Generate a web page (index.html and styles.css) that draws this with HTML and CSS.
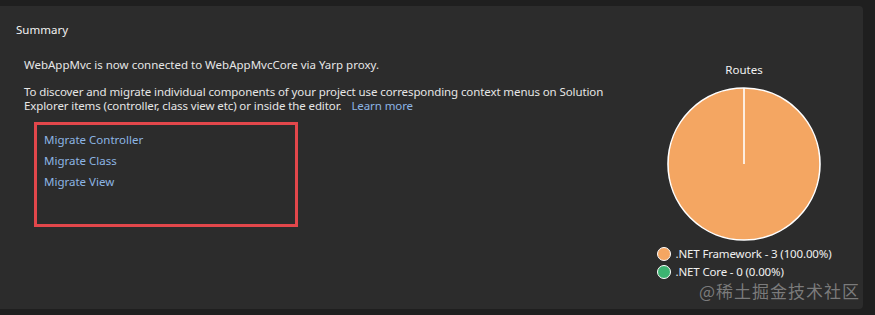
FILE: index.html
```html
<!DOCTYPE html>
<html lang="en">
<head>
    <meta charset="UTF-8" />
    <title>Summary</title>
    <link rel="stylesheet" href="styles.css">
</head>
<body>
    <div class="panel">
        <h2 class="panel-title">Summary</h2>

        <div class="panel-body">
            <div class="summary-text">
                <p class="connected">WebAppMvc is now connected to WebAppMvcCore via Yarp proxy.</p>
                <p class="discover">To discover and migrate individual components of your project use corresponding context menus on Solution Explorer items (controller, class view etc) or inside the editor.<a href="#" class="learn-more">Learn more</a></p>

                <ul class="migrate-list">
                    <li><a href="#">Migrate Controller</a></li>
                    <li><a href="#">Migrate Class</a></li>
                    <li><a href="#">Migrate View</a></li>
                </ul>
            </div>

            <div class="chart">
                <div class="chart-title">Routes</div>
                <svg class="pie" width="156" height="156" viewBox="0 0 156 156">
                    <circle cx="78" cy="78" r="76" fill="#f4a662" stroke="#ffffff" stroke-width="1.6" />
                    <line x1="78" y1="2" x2="78" y2="78" stroke="#ffffff" stroke-width="1.6" />
                </svg>
                <ul class="legend">
                    <li><span class="dot dot-framework"></span>.NET Framework - 3 (100.00%)</li>
                    <li><span class="dot dot-core"></span>.NET Core - 0 (0.00%)</li>
                </ul>
            </div>
        </div>

        <div class="watermark">@稀土掘金技术社区</div>
    </div>
</body>
</html>
```

FILE: styles.css
```css
/* Reset */
* {
    box-sizing: border-box;
    margin: 0;
    padding: 0;
}

body {
    background-color: #1f1f1f;
    color: #e6e6e6;
    font-family: "Noto Sans", "Open Sans", sans-serif;
    font-size: 11.5px;
    padding-top: 6px;
    width: 875px;
    height: 315px;
    overflow: hidden;
}

/* Summary panel */
.panel {
    position: relative;
    width: 863px;
    height: 303px;
    background-color: #2c2c2c;
    border-radius: 0 4px 4px 0;
    padding: 15px 15px 0 16px;
}

.panel-title {
    font-size: 11.5px;
    font-weight: normal;
    line-height: 17px;
    color: #f2f2f2;
}

.panel-body {
    display: flex;
}

.summary-text {
    flex: 1;
    padding-left: 8px;
    line-height: 14px;
}

.connected {
    margin-top: 20px;
}

.discover {
    margin-top: 13px;
    width: 590px;
    letter-spacing: -0.1px;
}

.learn-more {
    color: #8db5e4;
    text-decoration: none;
    padding-left: 10px;
}

/* Migrate links, boxed in red */
.migrate-list {
    list-style: none;
    margin-top: 9px;
    margin-left: 10px;
    width: 264px;
    height: 105px;
    border: 3px solid #e2474b;
    padding: 4px 0 0 7px;
    line-height: 21px;
}

.migrate-list a {
    color: #8db5e4;
    text-decoration: none;
}

/* Routes chart */
.chart {
    width: 208px;
    display: flex;
    flex-direction: column;
    align-items: center;
}

.chart-title {
    margin-top: 24px;
    line-height: 16px;
    color: #f2f2f2;
}

.pie {
    display: block;
    margin-top: 8px;
}

.legend {
    list-style: none;
    margin-top: 3px;
    line-height: 18px;
    color: #f0f0f0;
    letter-spacing: -0.15px;
}

.legend li {
    display: flex;
    align-items: center;
    gap: 5px;
}

.dot {
    width: 14px;
    height: 14px;
    border-radius: 50%;
    border: 1.5px solid #ffffff;
}

.dot-framework {
    background-color: #f4a662;
}

.dot-core {
    background-color: #3cb371;
}

/* Site watermark over the corner */
.watermark {
    position: absolute;
    right: 3px;
    bottom: 6px;
    font-family: "Noto Sans CJK SC", sans-serif;
    font-size: 17px;
    letter-spacing: 1px;
    color: rgba(150, 150, 150, 0.75);
}
```
